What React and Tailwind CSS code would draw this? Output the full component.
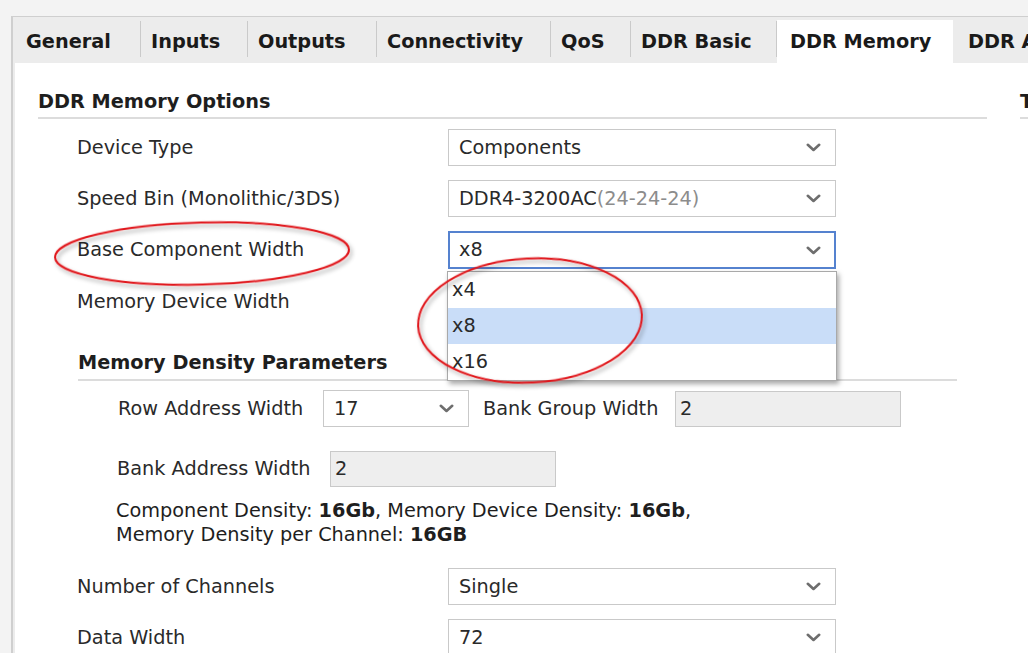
import React from "react";

const tabs = [
  { label: "General", w: "w-[126px]", pl: "pl-[11px]" },
  { label: "Inputs", w: "w-[107px]", pl: "pl-[10px]" },
  { label: "Outputs", w: "w-[129px]", pl: "pl-[10px]" },
  { label: "Connectivity", w: "w-[174px]", pl: "pl-[10px]" },
  { label: "QoS", w: "w-[80px]", pl: "pl-[10px]" },
  { label: "DDR Basic", w: "w-[146px]", pl: "pl-[10px]" },
];

function Chevron() {
  return (
    <svg width="15" height="9" viewBox="0 0 15 9" className="shrink-0">
      <path d="M1.8 1.8 L7.5 7 L13.2 1.8" fill="none" stroke="#6e6e6e" strokeWidth="2.6" strokeLinecap="round" strokeLinejoin="round" />
    </svg>
  );
}

function Select({ children, className }) {
  return (
    <div className={"flex h-[37px] items-center justify-between border border-[#c9c9c9] bg-white pl-[10px] pr-[14px] " + className}>
      <span className="whitespace-nowrap">{children}</span>
      <Chevron />
    </div>
  );
}

function ReadOnly({ children, className }) {
  return (
    <div className={"flex h-[36px] items-center border border-[#c9c9c9] bg-[#eeeeee] pl-[4px] " + className}>
      {children}
    </div>
  );
}

export default function App() {
  return (
    <div className="relative h-[653px] w-[1028px] overflow-hidden bg-[#f3f3f3] pl-[11px] pt-[16px] font-['DejaVu_Sans',sans-serif] text-[19.3px] leading-[24px] text-[#1e1e1e]">
      <div className="flex h-full flex-col border-l-2 border-t border-[#cfcfcf] bg-[#ececec] pl-[2px]">
        {/* Tabs */}
        <div className="flex h-[46px] shrink-0 items-start whitespace-nowrap font-bold text-[#1a1a1a]">
          {tabs.map((t) => (
            <div key={t.label} className={"mt-[3px] flex h-[43px] shrink-0 " + t.w}>
              <div className={"flex flex-1 items-center " + t.pl}>{t.label}</div>
              <div className="mt-[1px] h-[36px] w-px bg-[#cacaca]" />
            </div>
          ))}
          <div className="mt-[3px] flex h-[43px] w-[176px] shrink-0 items-center bg-white pl-[13px]">DDR Memory</div>
          <div className="mt-[3px] flex h-[43px] shrink-0 items-center pl-[15px]">DDR Advanced</div>
        </div>

        {/* Content */}
        <div className="flex flex-1 bg-white pl-[23px] pt-[27px]">
          <div className="w-[949px] shrink-0">
            <div className="font-bold">DDR Memory Options</div>
            <div className="mt-[3px] h-[2px] bg-[#dcdcdc]" />

            <div className="mt-[10px] flex flex-col gap-[14px] pl-[39px] text-[#2a2a2a]">
              <div className="flex items-center">
                <div className="w-[371px]">Device Type</div>
                <Select className="w-[388px]">Components</Select>
              </div>
              <div className="flex items-center">
                <div className="w-[371px]">Speed Bin (Monolithic/3DS)</div>
                <Select className="w-[388px]">
                  DDR4-3200AC<span className="text-[#8c8c8c]">(24-24-24)</span>
                </Select>
              </div>
              <div className="flex items-center">
                <div className="w-[371px]">Base Component Width</div>
                <div className="relative flex h-[38px] w-[388px] items-center justify-between border-2 border-[#5582cf] bg-white pl-[9px] pr-[13px]">
                  <span>x8</span>
                  <Chevron />
                  <div className="absolute left-[-3px] top-[38px] z-10 w-[390px] border border-[#a9a9a9] bg-white shadow-[2px_3px_5px_rgba(0,0,0,0.35)]">
                    <div className="flex h-[36px] items-center pl-[4px]">x4</div>
                    <div className="flex h-[36px] items-center bg-[#c9ddf8] pl-[4px]">x8</div>
                    <div className="flex h-[36px] items-center pl-[4px]">x16</div>
                  </div>
                </div>
              </div>
              <div className="flex items-center">
                <div className="w-[371px]">Memory Device Width</div>
                <Select className="w-[388px]">x8</Select>
              </div>
            </div>

            {/* Memory Density Parameters */}
            <div className="ml-[40px] mt-[31px] w-[879px]">
              <div className="font-bold">Memory Density Parameters</div>
              <div className="mt-[4px] h-[2px] bg-[#dcdcdc]" />

              <div className="mt-[9px] flex h-[37px] items-center pl-[40px] text-[#2a2a2a]">
                <div className="w-[205px]">Row Address Width</div>
                <Select className="w-[146px]">17</Select>
                <div className="ml-[14px] w-[192px]">Bank Group Width</div>
                <ReadOnly className="w-[226px]">2</ReadOnly>
              </div>

              <div className="mt-[24px] flex h-[36px] items-center pl-[39px] text-[#2a2a2a]">
                <div className="w-[213px]">Bank Address Width</div>
                <ReadOnly className="w-[226px]">2</ReadOnly>
              </div>

              <div className="mt-[12px] pl-[38px]">
                <div>
                  Component Density: <b>16Gb</b>, Memory Device Density: <b>16Gb</b>,
                </div>
                <div>
                  Memory Density per Channel: <b>16GB</b>
                </div>
              </div>
            </div>

            <div className="mt-[21px] flex flex-col gap-[14px] pl-[39px] text-[#2a2a2a]">
              <div className="flex items-center">
                <div className="w-[371px]">Number of Channels</div>
                <Select className="w-[388px]">Single</Select>
              </div>
              <div className="flex items-center">
                <div className="w-[371px]">Data Width</div>
                <Select className="w-[388px]">72</Select>
              </div>
            </div>
          </div>

          <div className="ml-[33px] w-[300px] shrink-0">
            <div className="whitespace-nowrap font-bold">Timing Parameters</div>
            <div className="mt-[3px] h-[2px] bg-[#dcdcdc]" />
          </div>
        </div>
      </div>

      {/* Annotation ellipses */}
      <svg className="pointer-events-none absolute left-0 top-0 z-20" width="1028" height="653">
        <defs>
          <filter id="sh" x="-20%" y="-30%" width="140%" height="160%">
            <feDropShadow dx="2" dy="3" stdDeviation="2" floodColor="#000" floodOpacity="0.35" />
          </filter>
        </defs>
        <ellipse cx="202" cy="253.5" rx="147" ry="31" fill="none" stroke="#e0161a" strokeWidth="2" transform="rotate(-1.5 202 253.5)" filter="url(#sh)" />
        <ellipse cx="530" cy="320.5" rx="112" ry="62" fill="none" stroke="#e0161a" strokeWidth="2" transform="rotate(-3 530 320.5)" filter="url(#sh)" />
      </svg>
    </div>
  );
}
